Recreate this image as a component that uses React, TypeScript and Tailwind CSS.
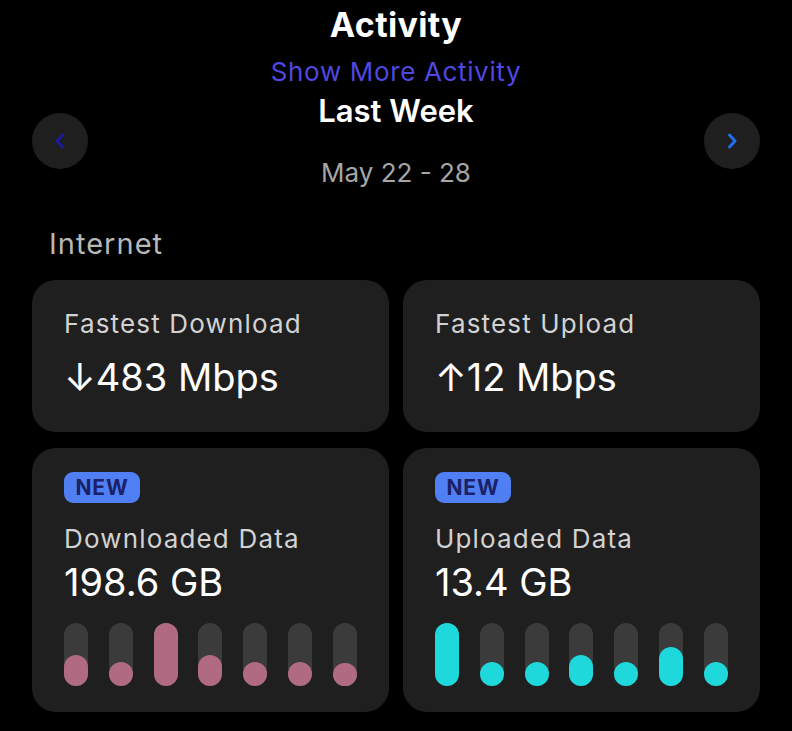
import React from "react";

const downBars = [31, 24, 63, 31, 24, 24, 23];
const upBars = [63, 24, 24, 31, 24, 39, 24];

function Bars({ values, color }: { values: number[]; color: string }) {
  return (
    <div className="mt-[18px] flex h-[63px] items-end justify-between">
      {values.map((v, i) => (
        <div key={i} className="relative flex h-[63px] w-[24px] items-end rounded-full bg-[#3b3b3b]">
          <div className={`w-[24px] rounded-full ${color}`} style={{ height: `${v}px` }} />
        </div>
      ))}
    </div>
  );
}

function Chevron({ dir, color }: { dir: "left" | "right"; color: string }) {
  return (
    <svg width="14" height="20" viewBox="0 0 14 20" fill="none">
      <path
        d={dir === "left" ? "M9.5 4 L4 10 L9.5 16" : "M4.5 4 L10 10 L4.5 16"}
        stroke={color}
        strokeWidth="3"
        strokeLinecap="round"
        strokeLinejoin="round"
      />
    </svg>
  );
}

function StatCard({ label, value }: { label: string; value: React.ReactNode }) {
  return (
    <div className="flex h-[152px] flex-col rounded-[24px] bg-[#1f1f1f] px-[32px] pt-[28px]">
      <div className="text-[26px] leading-[32px] tracking-[0.045em] text-[#d2d2d2]">{label}</div>
      <div className="mt-[14px] text-[38px] leading-[46px] text-white">{value}</div>
    </div>
  );
}

function DataCard({ label, value, bars, color }: { label: string; value: string; bars: number[]; color: string }) {
  return (
    <div className="flex h-[264px] flex-col rounded-[24px] bg-[#1f1f1f] px-[32px] pt-[24px]">
      <div className="flex h-[31px] w-[76px] items-center justify-center rounded-[9px] bg-[#4f7ff2] text-[21px] font-bold leading-none tracking-[0.04em] text-[#1a2167]">
        NEW
      </div>
      <div className="mt-[20px] text-[26px] leading-[32px] tracking-[0.045em] text-[#d2d2d2]">{label}</div>
      <div className="mt-[4px] text-[38px] leading-[46px] text-white">{value}</div>
      <Bars values={bars} color={color} />
    </div>
  );
}

export default function App() {
  return (
    <div
      className="min-h-[731px] w-[792px] bg-black px-[32px]"
      style={{ fontFamily: "Inter, 'Noto Sans', sans-serif" }}
    >
      <div className="flex flex-col items-center">
        <div className="mt-[5px] text-[34px] font-bold leading-[40px] tracking-[0.01em] text-white">Activity</div>
        <div className="mt-[12px] text-[26px] leading-[30px] tracking-[0.025em] text-[#4f48e2]">Show More Activity</div>
      </div>
      <div className="mt-[6px] flex items-center justify-between">
        <div className="flex h-[56px] w-[56px] items-center justify-center rounded-full bg-[#1f1f1f]">
          <Chevron dir="left" color="#1c1c9c" />
        </div>
        <div className="flex flex-col items-center">
          <div className="text-[31px] font-semibold leading-[36px] text-white">Last Week</div>
          <div className="mt-[28px] text-[26px] leading-[32px] text-[#a6a6a6]">May 22 - 28</div>
        </div>
        <div className="flex h-[56px] w-[56px] items-center justify-center rounded-full bg-[#1f1f1f]">
          <Chevron dir="right" color="#1f6fe8" />
        </div>
      </div>
      <div className="mt-[37px] pl-[17px] text-[29px] leading-[36px] tracking-[0.035em] text-[#b8b8b8]">Internet</div>
      <div className="mt-[18px] grid grid-cols-2 gap-x-[14px] gap-y-[16px]">
        <StatCard label="Fastest Download" value={<span>↓483 Mbps</span>} />
        <StatCard label="Fastest Upload" value={<span>↑12 Mbps</span>} />
        <DataCard label="Downloaded Data" value="198.6 GB" bars={downBars} color="bg-[#b06b82]" />
        <DataCard label="Uploaded Data" value="13.4 GB" bars={upBars} color="bg-[#1ed8db]" />
      </div>
    </div>
  );
}
